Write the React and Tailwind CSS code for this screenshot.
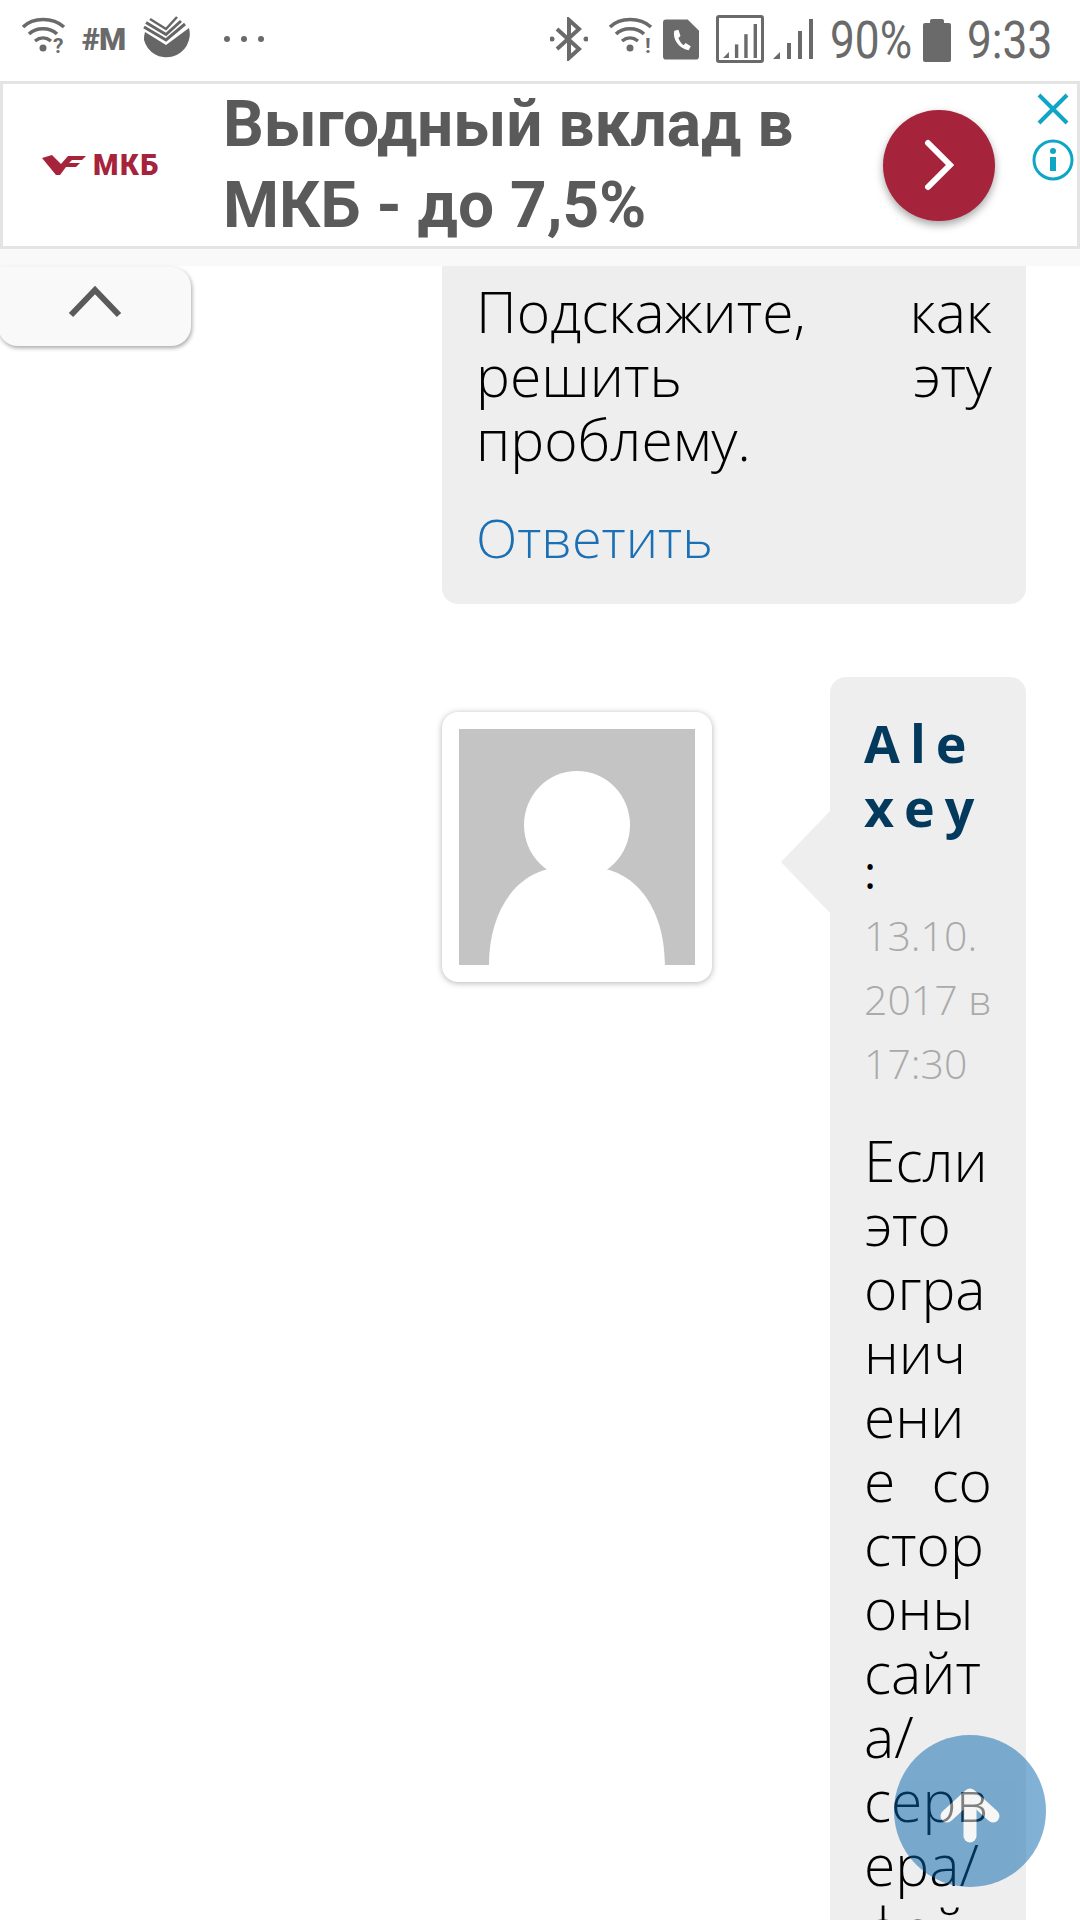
const sans = "font-['Open_Sans',sans-serif]";

function WifiIcon({ mark }) {
  return (
    <svg width="46" height="48" viewBox="0 0 46 48" fill="none" stroke="#6a6a6a" strokeWidth="3.5">
      <path d="M2 12 C12 2 32 2 43 12" />
      <path d="M8 19 C15 12 29 12 36 19" />
      <path d="M14 26 C19 22 25 22 30 26" />
      <circle cx="22" cy="33" r="3.5" fill="#6a6a6a" stroke="none" />
      {mark === "?" && (
        <text x="32" y="38" fontSize="21" fontWeight="700" fill="#6a6a6a" stroke="none" fontFamily="Roboto, sans-serif">?</text>
      )}
      {mark === "!" && (
        <text x="37" y="38" fontSize="21" fontWeight="700" fill="#6a6a6a" stroke="none" fontFamily="Roboto, sans-serif">!</text>
      )}
    </svg>
  );
}

function SberIcon() {
  return (
    <svg width="48" height="48" viewBox="0 0 48 48">
      <path d="M2 17 L23 30 L46 13 A23 23 0 1 1 1 25 Q1 20 2 17 Z" fill="#666" />
      <path d="M1 12 L23 25 L42 9" fill="none" stroke="#666" strokeWidth="3" />
      <path d="M3 7.5 L23 19.5 L38 6" fill="none" stroke="#666" strokeWidth="3" />
      <path d="M7 4 L23 14 L34 2" fill="none" stroke="#666" strokeWidth="2.5" />
    </svg>
  );
}

function Bars({ size = 40 }) {
  return (
    <svg width={size} height={size} viewBox="0 0 40 40" fill="#6a6a6a">
      <path d="M0 40 L7 33 V40 Z" />
      <rect x="14" y="24" width="4" height="16" />
      <rect x="25" y="12" width="4" height="28" />
      <rect x="36" y="0" width="4" height="40" />
    </svg>
  );
}

function StatusBar() {
  return (
    <div className="h-[81px] flex items-center justify-between pl-[21px] pr-[30px] pb-[3px] bg-white text-[#6a6a6a]">
      <div className="flex items-center">
        <WifiIcon mark="?" />
        <span className="ml-[15px] text-[31px] leading-none font-black font-['Roboto',sans-serif] tracking-[-1px]">#M</span>
        <div className="ml-[18px]">
          <SberIcon />
        </div>
        <div className="ml-[33px] flex gap-[11px]">
          <span className="w-[6px] h-[6px] rounded-full bg-[#6a6a6a]" />
          <span className="w-[6px] h-[6px] rounded-full bg-[#6a6a6a]" />
          <span className="w-[6px] h-[6px] rounded-full bg-[#6a6a6a]" />
        </div>
      </div>
      <div className="flex items-center">
        <svg width="38" height="44" viewBox="0 0 38 44" fill="none" stroke="#6a6a6a" strokeWidth="4">
          <path d="M7 12 L29 32 L19 41 V3 L29 12 L7 32" />
          <circle cx="2" cy="22" r="2.5" fill="#6a6a6a" stroke="none" />
          <circle cx="36" cy="22" r="2.5" fill="#6a6a6a" stroke="none" />
        </svg>
        <div className="ml-[20px]">
          <WifiIcon mark="!" />
        </div>
        <svg className="ml-[9px]" width="36" height="41" viewBox="0 0 35 39">
          <path d="M3 0 H24 L35 11 V36 Q35 39 32 39 H3 Q0 39 0 36 V3 Q0 0 3 0 Z" fill="#6a6a6a" />
          <path d="M11 11 C9 19 15 28 25 30 L27 26 L22 23 L20 25 C18 24 16 21 15 18 L17 16 L15 10 Z" fill="#fff" />
        </svg>
        <div className="ml-[17px] w-[48px] h-[48px] border-[3px] border-[#6a6a6a] rounded-[3px] flex items-end justify-center pb-[2px]">
          <Bars size={34} />
        </div>
        <div className="ml-[9px]">
          <Bars />
        </div>
        <span className="ml-[17px] mt-[4px] w-[80px] text-[52px] leading-none font-['Roboto',sans-serif] scale-x-[0.85] origin-left whitespace-nowrap">90%</span>
        <div className="ml-[13px] mt-[2px] w-[28px] h-[43px]">
          <div className="mx-auto w-[14px] h-[4px] bg-[#6a6a6a] rounded-t-[2px]" />
          <div className="w-[28px] h-[39px] bg-[#6a6a6a] rounded-[2px]" />
        </div>
        <span className="ml-[16px] mt-[4px] w-[83px] text-[52px] leading-none font-['Roboto',sans-serif] scale-x-[0.85] origin-left whitespace-nowrap">9:33</span>
      </div>
    </div>
  );
}

function AdBanner() {
  return (
    <div className="bg-[#f9f9f9] pb-[17px]">
      <div className="h-[168px] bg-white border-[3px] border-[#e4e4e4] flex items-center">
        <div className="w-[220px] shrink-0 pl-[39px] flex items-center gap-[7px] text-[#a6233c]">
          <svg width="44" height="22" viewBox="0 0 44 22" fill="#a6233c">
            <path d="M0 4 L10 1 L19 10 L26 2 H44 L40 6 H30 L27 9 H38 L34 13 H24 L18 21 H14 Z" />
          </svg>
          <span className="text-[29px] leading-none font-black font-['Roboto',sans-serif] tracking-[1.5px]">МКБ</span>
        </div>
        <div className="flex-1 text-[64px] leading-[81px] font-bold font-['Roboto',sans-serif] text-[#5a5a5a]">
          Выгодный вклад в
          <br />
          МКБ - до 7,5%
        </div>
        <button className="w-[112px] h-[111px] rounded-full bg-[#a6233c] shadow-[0_4px_8px_rgba(0,0,0,0.35)] flex items-center justify-center shrink-0">
          <svg width="30" height="52" viewBox="0 0 30 52" fill="none" stroke="#fff" strokeWidth="6" strokeLinecap="round">
            <path d="M4 4 L26 26 L4 48" />
          </svg>
        </button>
        <div className="w-[82px] shrink-0 self-start pt-[9px] flex flex-col items-center pl-[33px] gap-[14px] text-[#0fa6c6]">
          <svg className="shrink-0" width="34" height="32" viewBox="0 0 34 32" fill="none" stroke="#0fa6c6" strokeWidth="4">
            <path d="M3 2 L31 30 M31 2 L3 30" />
          </svg>
          <svg className="shrink-0" width="42" height="42" viewBox="0 0 42 42" fill="none" stroke="#0fa6c6" strokeWidth="3">
            <circle cx="21" cy="21" r="19" />
            <circle cx="21" cy="12" r="3" fill="#0fa6c6" stroke="none" />
            <rect x="18" y="18" width="6" height="14" fill="#0fa6c6" stroke="none" />
          </svg>
        </div>
      </div>
    </div>
  );
}

function FirstComment() {
  return (
    <div className="bg-[#eeeeee] rounded-b-[16px] pl-[34px] pr-[34px] pt-[13px] pb-[35px] font-light text-black">
      <p className="text-[57px] leading-[64px] text-justify">Подскажите, как решить эту проблему.</p>
      <p className="mt-[34px] text-[54px] leading-[64px] text-[#1a6fb5]">Ответить</p>
    </div>
  );
}

function SecondComment() {
  return (
    <div className="mt-[73px] flex items-start gap-[118px]">
      <div className="mt-[35px] w-[270px] h-[270px] shrink-0 bg-white rounded-[16px] p-[17px] shadow-[0_1px_6px_rgba(0,0,0,0.3)]">
        <div className="w-full h-full bg-[#c4c4c4]">
          <svg width="236" height="236" viewBox="0 0 236 236" fill="#fff">
            <ellipse cx="118" cy="96" rx="53" ry="54" />
            <path d="M30 236 C30 170 70 130 118 140 C166 130 206 170 206 236 Z" />
          </svg>
        </div>
      </div>
      <div className="relative w-[196px] shrink-0 bg-[#eeeeee] rounded-t-[16px] pl-[34px] pr-[34px] pt-[34px] pb-[40px]">
        <div className="absolute left-[-49px] top-[134px] w-0 h-0 border-y-[51px] border-y-transparent border-r-[49px] border-r-[#eeeeee]" />
        <p className="text-[52px] leading-[64px] font-bold text-[#03395c] tracking-[10px] break-all">Alexey</p>
        <p className="text-[46px] leading-[64px] text-black">:</p>
        <p className="text-[41px] leading-[64px] font-light text-[#aaaaaa]">13.10. 2017 в 17:30</p>
        <p className="mt-[33px] text-[57px] leading-[64px] font-light text-black text-justify break-words">
          Если это ограничение со стороны сайта/сервера/файла
        </p>
      </div>
    </div>
  );
}

export default function App() {
  return (
    <div className={`relative w-[1080px] h-[1920px] overflow-hidden bg-white ${sans}`}>
      <StatusBar />
      <AdBanner />
      <div className="pl-[442px] pr-[54px]">
        <FirstComment />
        <SecondComment />
      </div>
      <button className="absolute left-[-2px] top-[267px] w-[193px] h-[79px] bg-[#f9f9f9] rounded-b-[20px] rounded-tr-[20px] shadow-[1px_2px_4px_rgba(0,0,0,0.35)] flex justify-center pt-[16px]">
        <svg width="54" height="36" viewBox="0 0 54 36" fill="none" stroke="#5a5a5a" strokeWidth="6">
          <path d="M3 32 L27 7 L51 32" />
        </svg>
      </button>
      <button className="absolute left-[894px] top-[1735px] w-[152px] h-[152px] rounded-full bg-[#0464ac] opacity-50 flex justify-center pt-[52px]">
        <svg width="60" height="56" viewBox="0 0 60 56" fill="none" stroke="#fff" strokeWidth="13" strokeLinecap="round" strokeLinejoin="round">
          <path d="M7 29 L30 8 L53 29" />
          <path d="M30 10 L30 49" />
        </svg>
      </button>
    </div>
  );
}
